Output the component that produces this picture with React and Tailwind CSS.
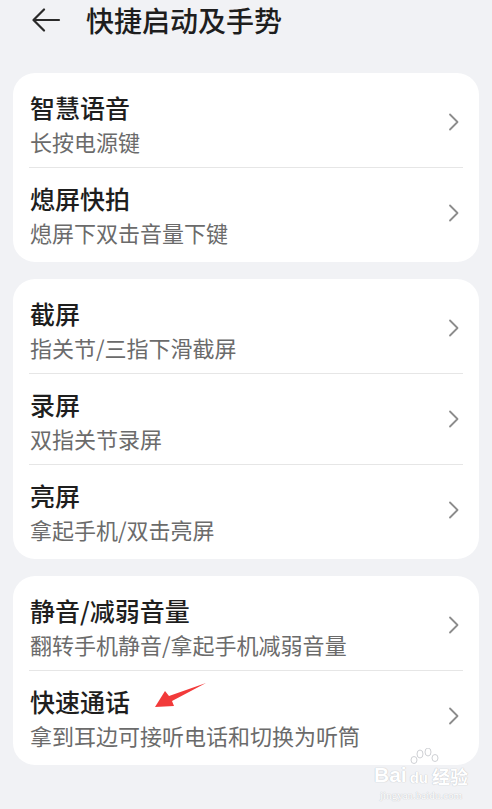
const groups = [
  [
    { title: "智慧语音", sub: "长按电源键" },
    { title: "熄屏快拍", sub: "熄屏下双击音量下键" },
  ],
  [
    { title: "截屏", sub: "指关节/三指下滑截屏" },
    { title: "录屏", sub: "双指关节录屏" },
    { title: "亮屏", sub: "拿起手机/双击亮屏" },
  ],
  [
    { title: "静音/减弱音量", sub: "翻转手机静音/拿起手机减弱音量" },
    { title: "快速通话", sub: "拿到耳边可接听电话和切换为听筒" },
  ],
];

function Chevron() {
  return (
    <svg width="12" height="18" viewBox="0 0 12 18" fill="none" className="shrink-0">
      <path d="M2 1.5 L9.5 9 L2 16.5" stroke="#8c8c8c" strokeWidth="1.8" strokeLinecap="round" strokeLinejoin="round" />
    </svg>
  );
}

function Row({ item, last }) {
  return (
    <div>
      <div className="h-[90px] flex items-center pl-[17px] pr-[19px]">
        <div className="flex-1 min-w-0 pt-[3px]">
          <div className="text-[25px] leading-[34px] font-medium text-[#1e1e1e]">{item.title}</div>
          <div className="text-[22px] leading-[34px] text-[#6b6b6b]">{item.sub}</div>
        </div>
        <Chevron />
      </div>
      {!last && <div className="mx-[16px] h-px bg-[#e6e6e6]" />}
    </div>
  );
}

export default function App() {
  return (
    <div
      className="relative min-h-[809px] w-[492px] bg-[#f1f2f5] overflow-hidden"
      style={{ fontFamily: '"Noto Sans CJK SC", "Noto Sans", sans-serif' }}
    >
      <div className="h-[38px] flex items-center pl-[31px] pt-[1px]">
        <svg width="30" height="24" viewBox="0 0 30 24" fill="none">
          <path d="M28 12 H3 M13 1.5 L2.5 12 L13 22.5" stroke="#2a2a2a" strokeWidth="2.2" strokeLinecap="round" strokeLinejoin="round" />
        </svg>
        <div className="ml-[25px] text-[28px] leading-[38px] font-medium text-[#1e1e1e]">快捷启动及手势</div>
      </div>

      <div className="mt-[35px] px-[13px] flex flex-col gap-[17px]">
        {groups.map((g, gi) => (
          <div key={gi} className="bg-white rounded-[22px] py-[4px]">
            {g.map((item, i) => (
              <Row key={item.title} item={item} last={i === g.length - 1} />
            ))}
          </div>
        ))}
      </div>

      {/* red annotation arrow */}
      <svg className="absolute left-0 top-0 pointer-events-none" width="492" height="809" viewBox="0 0 492 809">
        <polygon points="155,707 165,691 169,696 206,683 172,701 174,706" fill="#f23a3a" />
      </svg>

      {/* watermark */}
      <div className="absolute left-[374px] top-[748px] flex flex-col items-center text-white [text-shadow:0_0_1px_#c4c6ca,0_0_1px_#c4c6ca]">
        <svg width="36" height="20" viewBox="0 0 36 20" fill="white" stroke="#cfd1d5" strokeWidth="1" className="ml-[10px] -mb-[4px]">
          <ellipse cx="12" cy="6" rx="3" ry="4" />
          <ellipse cx="20" cy="4" rx="3" ry="4" />
          <ellipse cx="6" cy="12" rx="3" ry="3.5" />
          <ellipse cx="27" cy="10" rx="3" ry="3.5" />
        </svg>
        <div className="flex items-end leading-none">
          <span className="text-[21px] font-bold" style={{ fontFamily: '"Liberation Sans", sans-serif' }}>Bai</span>
          <span className="text-[15px] font-bold ml-[3px]" style={{ fontFamily: '"Liberation Sans", sans-serif' }}>du</span>
          <span className="text-[18px] font-bold ml-[4px]">经验</span>
        </div>
        <div className="text-[11px] leading-[14px] mt-[3px]" style={{ fontFamily: '"Liberation Serif", serif' }}>jingyan.baidu.com</div>
      </div>
    </div>
  );
}
